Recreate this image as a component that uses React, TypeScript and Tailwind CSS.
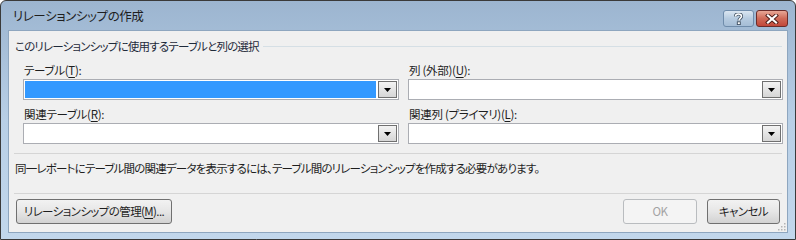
import React from 'react'

const jp = "font-['Meiryo_UI','Noto_Sans_CJK_JP',sans-serif] [font-feature-settings:'palt']"

function Mn({ children }: { children: React.ReactNode }) {
  return <span className="underline underline-offset-[2px] decoration-[1px]">{children}</span>
}

function Arrow() {
  return (
    <svg width="7" height="4" viewBox="0 0 7 4">
      <path d="M0 0H7L3.5 4Z" fill="#000" />
    </svg>
  )
}

function Combo({ selected }: { selected?: boolean }) {
  return (
    <div className="flex h-[21px] border border-[#abadb3] bg-white p-px">
      <div className={selected ? 'flex-1 bg-[#3399ff]' : 'flex-1'} />
      <div className="ml-[2px] flex w-[19px] items-center justify-center border border-[#707070] bg-gradient-to-b from-[#f3f3f3] to-[#d6d6d6]">
        <Arrow />
      </div>
    </div>
  )
}

function Field({ label, selected }: { label: React.ReactNode; selected?: boolean }) {
  return (
    <div className="flex flex-col">
      <div className="h-[17px] pl-px text-[11.5px] leading-[17px] tracking-[-0.3px] text-[#1e1e1e]">{label}</div>
      <Combo selected={selected} />
    </div>
  )
}

function Button({ children, disabled, className }: { children: React.ReactNode; disabled?: boolean; className?: string }) {
  return (
    <div
      className={
        'flex h-[25px] items-center justify-center whitespace-nowrap rounded-[3px] border text-[11.5px] tracking-[-0.6px] ' +
        (disabled
          ? 'border-[#b9bcbf] bg-[#f4f4f4] text-[#a3a3a3] '
          : 'border-[#707070] bg-gradient-to-b from-[#f2f2f2] via-[#e6e6e6] to-[#d2d2d2] text-[#1e1e1e] ') +
        (className ?? '')
      }
    >
      <span>{children}</span>
    </div>
  )
}

export default function App() {
  return (
    <div className={'flex h-[240px] w-[796px] flex-col rounded-t-[6px] border border-[#3a3a3a] bg-gradient-to-b from-[#9cb5d0] via-[#b8cfe6] to-[#c2d7ec] px-[7px] pb-[6px] ' + jp}>
      {/* title bar */}
      <div className="flex h-[29px] items-center justify-between">
        <div className="pl-[5px] pt-[2px] text-[12.5px] tracking-[-0.4px] text-[#1e1e1e]">リレーションシップの作成</div>
        <div className="flex gap-[2px] self-start pt-[9px]">
          <div className="flex h-[17px] w-[31px] items-center justify-center rounded-[3px] border border-[#6f8cab] bg-gradient-to-b from-[#dbe6f1] via-[#b6cbe0] to-[#a5bdd6]">
            <svg width="9" height="12" viewBox="0 0 9 12">
              <path d="M1.5 3.5C1.5 1.5 3 1 4.5 1S7.5 1.8 7.5 3.5C7.5 5 5 5.5 5 7.5" fill="none" stroke="#3e4e60" strokeWidth="3.2" />
              <path d="M1.5 3.5C1.5 1.5 3 1 4.5 1S7.5 1.8 7.5 3.5C7.5 5 5 5.5 5 7.5" fill="none" stroke="#fff" strokeWidth="1.6" />
              <rect x="3.3" y="8.8" width="3" height="2.8" fill="#fff" stroke="#3e4e60" strokeWidth="0.9" />
            </svg>
          </div>
          <div className="flex h-[17px] w-[32px] items-center justify-center rounded-[3px] border border-[#6b2c2a] bg-gradient-to-b from-[#e7a796] via-[#cf6a58] to-[#c2473a]">
            <svg width="14" height="10" viewBox="0 0 14 10">
              <path d="M3 1.5L11 8.5M11 1.5L3 8.5" stroke="#4a1a16" strokeWidth="4" strokeLinecap="square" />
              <path d="M3 1.5L11 8.5M11 1.5L3 8.5" stroke="#fff" strokeWidth="2.2" strokeLinecap="square" />
            </svg>
          </div>
        </div>
      </div>

      {/* client area */}
      <div className="relative flex flex-1 flex-col border border-[#8ea6bf] bg-[#f0f0f0] text-[#1e1e1e]">
        <div className="flex items-center gap-[4px] pl-[6px] pr-[5px] pt-[8px]">
          <span className="text-[11.5px] leading-[14px] tracking-[-0.8px] text-[#1e2a3a]">このリレーションシップに使用するテーブルと列の選択</span>
          <div className="h-px flex-1 bg-[#d5dfe5]" />
        </div>

        <div className="grid grid-cols-[376px_375px] gap-x-[9px] gap-y-[6px] pl-[14px] pt-[9px]">
          <Field label={<>テーブル(<Mn>T</Mn>):</>} selected />
          <Field label={<>列 (外部)(<Mn>U</Mn>):</>} />
          <Field label={<>関連テーブル(<Mn>R</Mn>):</>} />
          <Field label={<>関連列 (プライマリ)(<Mn>L</Mn>):</>} />
        </div>

        <div className="mx-[5px] mt-[9px] h-px bg-[#d5d5d5]" />
        <div className="pl-[6px] pt-[6px] text-[11.5px] leading-[16px] tracking-[-0.8px]">
          同一レポートにテーブル間の関連データを表示するには、テーブル間のリレーションシップを作成する必要があります。
        </div>
        <div className="mx-[5px] mt-[17px] h-px bg-[#d5d5d5]" />

        <div className="flex items-center px-[7px] pt-[5px]">
          <Button className="w-[156px]">
            リレーションシップの管理(<Mn>M</Mn>)...
          </Button>
          <div className="flex-1" />
          <Button disabled className="w-[74px]">OK</Button>
          <Button className="ml-[10px] w-[73px]">キャンセル</Button>
        </div>

        <svg className="absolute bottom-[1px] right-[1px]" width="10" height="10" viewBox="0 0 10 10">
          {[[8, 2], [8, 5], [5, 5], [8, 8], [5, 8], [2, 8]].map(([x, y]) => (
            <rect key={`${x}-${y}`} x={x} y={y} width="1.5" height="1.5" fill="#b4b4b4" />
          ))}
        </svg>
      </div>
    </div>
  )
}
